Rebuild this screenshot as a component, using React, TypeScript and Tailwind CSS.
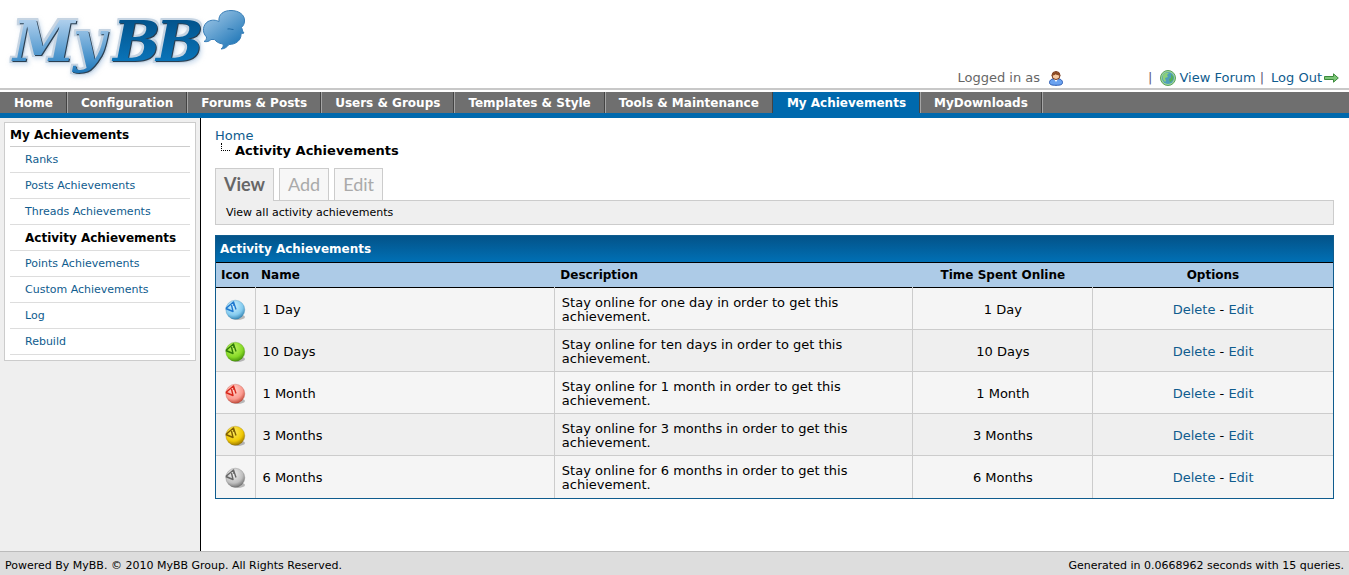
const NAV = ['Home', 'Configuration', 'Forums & Posts', 'Users & Groups', 'Templates & Style', 'Tools & Maintenance', 'My Achievements', 'MyDownloads'];
const SIDE = ['Ranks', 'Posts Achievements', 'Threads Achievements', 'Activity Achievements', 'Points Achievements', 'Custom Achievements', 'Log', 'Rebuild'];

const ROWS = [
  { id: 'blue', name: '1 Day', text: 'one day', light: '#d4f2fd', mid: '#84cbef', dark: '#2f7fae', hand: '#1f78d0' },
  { id: 'green', name: '10 Days', text: 'ten days', light: '#c4f56a', mid: '#86d926', dark: '#3f8a08', hand: '#2f7a08' },
  { id: 'red', name: '1 Month', text: '1 month', light: '#ffd8d0', mid: '#fb998e', dark: '#b8402f', hand: '#d8281c' },
  { id: 'gold', name: '3 Months', text: '3 months', light: '#ffec5e', mid: '#efc805', dark: '#8f6c00', hand: '#7d5c00' },
  { id: 'grey', name: '6 Months', text: '6 months', light: '#f0f0f0', mid: '#bfbfbf', dark: '#6a6a6a', hand: '#666666' },
];

function Logo() {
  return (
    <svg width="250" height="84" viewBox="0 0 250 84" role="img" aria-label="MyBB" className="block">
      <defs>
        <linearGradient id="my" x1="0" y1="18" x2="0" y2="76" gradientUnits="userSpaceOnUse">
          <stop offset="0" stopColor="#b4d2ee" />
          <stop offset="0.75" stopColor="#3f8dc8" />
          <stop offset="1" stopColor="#1470b4" />
        </linearGradient>
        <linearGradient id="bb" x1="0" y1="18" x2="0" y2="64" gradientUnits="userSpaceOnUse">
          <stop offset="0" stopColor="#02528a" />
          <stop offset="1" stopColor="#0a76bc" />
        </linearGradient>
        <linearGradient id="cloud" x1="0" y1="0" x2="0.8" y2="1">
          <stop offset="0" stopColor="#a9cdea" />
          <stop offset="1" stopColor="#1b74b6" />
        </linearGradient>
        <filter id="bevel" x="-10%" y="-10%" width="120%" height="130%" colorInterpolationFilters="sRGB">
          <feMorphology in="SourceAlpha" operator="dilate" radius="2" result="fat" />
          <feGaussianBlur in="fat" stdDeviation="0.6" result="rimShape" />
          <feFlood floodColor="#c6d4e2" />
          <feComposite in2="rimShape" operator="in" result="rim" />
          <feOffset in="fat" dx="1" dy="2" />
          <feGaussianBlur stdDeviation="2" result="haloShape" />
          <feFlood floodColor="#a8c4e2" floodOpacity="0.5" />
          <feComposite in2="haloShape" operator="in" result="halo" />
          <feOffset in="SourceAlpha" dx="1" dy="1" result="edgeShape" />
          <feFlood floodColor="#2a3f52" />
          <feComposite in2="edgeShape" operator="in" result="edge" />
          <feMerge>
            <feMergeNode in="halo" />
            <feMergeNode in="rim" />
            <feMergeNode in="edge" />
            <feMergeNode in="SourceGraphic" />
          </feMerge>
        </filter>
      </defs>
      <g fontFamily="'DejaVu Serif', serif" fontWeight="700" fontStyle="italic" fontSize="56" filter="url(#bevel)">
        <text x="13" y="61" fill="url(#my)">M</text>
        <text x="73" y="61" fill="url(#my)">y</text>
        <text x="113" y="61" fill="url(#bb)">B</text>
        <text x="156" y="61" fill="url(#bb)">B</text>
      </g>
      <path d="M219 21.500C218 14 224 10.500 231 10.500C239 10.500 245 15 244.500 21C244.500 24 243 26 241.500 27.500C242.500 29 242 31 244 33C242.500 33.500 241.500 33.500 241 34C241.500 40 236 44.500 229 44.500C227 47 224.500 49 221 49C223 47.500 223.500 46 223 44C218.500 43.500 216 41.500 214.500 39.500H211C209 41.500 207 42 204 41.500C206 40.500 206.500 39 206.500 37C201.500 32 203 24.500 208 21.500C212 19.500 216 20 219 21.500Z" fill="url(#cloud)" stroke="#3a7fb8" strokeWidth="1" />
      <path d="M227.500 29C230 28.500 231 29.500 233.500 29.500" stroke="#1f6aa5" fill="none" />
    </svg>
  );
}

function UserIcon() {
  return (
    <svg width="16" height="16" viewBox="0 0 16 16" aria-hidden="true">
      <path d="M1.500 12.500C1.500 10 4 8.500 8 8.500S14.500 10 14.500 12.500C14.500 14.800 12 15.300 8 15.300S1.500 14.800 1.500 12.500Z" fill="#6aa2f0" stroke="#2858b0" />
      <path d="M6 9L8 12L10 9Z" fill="#fff" />
      <circle cx="8" cy="5.500" r="4" fill="#f6c9a0" stroke="#70351c" />
      <path d="M3.800 6C3 0.500 13 0.500 12.200 6C10.500 5.500 8.500 4.800 7.500 4.300C6.500 5.500 5 5.500 3.800 6Z" fill="#8b4a24" />
    </svg>
  );
}

function GlobeIcon() {
  return (
    <svg width="16" height="16" viewBox="0 0 16 16" aria-hidden="true">
      <circle cx="8" cy="8" r="7.500" fill="#9fd69c" stroke="#5aa35e" />
      <circle cx="8" cy="8" r="6" fill="#4f9fba" />
      <path d="M3 5C5 2 8 2 9 3L7 5L8 7L5 8L6 11L5 12C3 10 2 8 3 5Z" fill="#8bd07a" />
      <path d="M11 4L13.500 7L13 10L10 12.500L9 9L11 8Z" fill="#54b05a" />
    </svg>
  );
}

function ArrowIcon() {
  return (
    <svg width="15" height="10" viewBox="0 0 15 10" aria-hidden="true">
      <path d="M0.500 3.500H9.500V0.800L14.300 5L9.500 9.200V6.500H0.500Z" fill="#7cc576" stroke="#3c8a3c" />
    </svg>
  );
}

function ClockIcon({ row }: { row: (typeof ROWS)[number] }) {
  return (
    <svg width="22" height="22" viewBox="0 0 22 22" role="img" aria-label={row.name} className="mx-auto block">
      <defs>
        <radialGradient id={row.id} cx="0.4" cy="0.3" r="0.75">
          <stop offset="0" stopColor={row.light} />
          <stop offset="0.65" stopColor={row.mid} />
          <stop offset="1" stopColor={row.dark} />
        </radialGradient>
      </defs>
      <ellipse cx="13.500" cy="18" rx="7.500" ry="3" fill="#000" opacity="0.25" />
      <circle cx="11.300" cy="10.700" r="9.500" fill={`url(#${row.id})`} stroke={row.dark} strokeOpacity="0.5" strokeWidth="0.600" />
      <path d="M1.800 9.500L9.500 3L10 7M1.800 9.500L9 12.500L7.500 6M9.500 3L12 10.500" fill="none" stroke={row.hand} strokeWidth="1.400" strokeLinejoin="round" />
    </svg>
  );
}

export default function App() {
  const link = 'text-[#0f5c8e] hover:underline';
  const cell = 'border-r border-[#ccc] pt-[2px]';
  return (
    <div className="flex min-h-screen flex-col bg-white font-['Verdana','DejaVu_Sans',sans-serif] text-[13px] leading-[14px] text-black">
      <header className="flex h-[90px] items-end justify-between border-b-2 border-[#c8c8c8]">
        <a href="#home" className="self-start"><Logo /></a>
        <div className="flex items-center pr-[10px] pb-[2px] leading-4 text-[#666]">
          <span className="mr-2">Logged in as</span>
          <UserIcon />
          <span className="ml-[84px] mr-2 text-[#5f5878]">|</span>
          <GlobeIcon />
          <a href="#forum" className={`ml-[3px] ${link}`}>View Forum</a>
          <span className="mx-1 text-[#5f5878]">|</span>
          <a href="#logout" className={`ml-[3px] flex items-center gap-[2px] ${link}`}>Log Out <ArrowIcon /></a>
        </div>
      </header>

      <nav className="mt-[2px] flex border-b-[5px] border-[#0069ad] bg-[#6f6f6f] text-[12px] font-bold leading-5 text-white">
        {NAV.map((item) => (
          <a
            key={item}
            href="#nav"
            className={`border-r border-r-[#444] pt-px pr-[13px] pl-[14px] shadow-[1px_0_0_#a5a5a5] ${item === 'My Achievements' ? 'bg-[#0069ad]' : ''}`}
          >
            {item}
          </a>
        ))}
      </nav>

      <div className="flex grow">
        <aside className="w-[201px] shrink-0 border-r border-black bg-[#efefef] px-1 pt-1 text-[11px]">
          <div className="border border-[#ccc] bg-white px-[5px] pb-[5px]">
            <h2 className="border-b border-[#ccc] pt-px text-[12px] font-bold leading-[22px]">My Achievements</h2>
            <ul>
              {SIDE.map((item) => (
                <li key={item} className="flex h-[26px] items-center border-b border-[#ddd] pt-px pl-[15px]">
                  <a href="#side" className={item === 'Activity Achievements' ? 'text-[12px] font-bold text-black' : link}>{item}</a>
                </li>
              ))}
            </ul>
          </div>
        </aside>

        <main className="min-w-0 grow px-[15px] pt-[10px] pl-[14px]">
          <a href="#home" className={`block leading-[15px] ${link}`}>Home</a>
          <div className="flex">
            <span className="ml-[6px] mr-[5px] h-2 w-[9px] border-b border-l border-dotted border-black" />
            <h1 className="font-bold leading-[15px]">Activity Achievements</h1>
          </div>

          <div className="mt-[10px] flex gap-[5px] font-['Trebuchet_MS','Lato',sans-serif] text-[18px] leading-[31px]">
            <a href="#view" className="relative -mb-px border border-b-0 border-[#ccc] bg-[#efefef] px-2 font-bold text-[#666]">View</a>
            <a href="#add" className="border border-b-0 border-[#ccc] bg-[#f7f7f7] px-2 text-[#aaa]">Add</a>
            <a href="#edit" className="border border-b-0 border-[#ccc] bg-[#f7f7f7] px-2 text-[#aaa]">Edit</a>
          </div>
          <p className="border border-[#ccc] bg-[#efefef] px-[10px] pt-px text-[11px] leading-[22px]">View all activity achievements</p>

          <section className="mt-[10px] border border-[#0f5c8e]">
            <h2 className="bg-linear-to-b from-[#035389] to-[#0070b5] px-1 text-[12px] font-bold leading-[26px] text-white">Activity Achievements</h2>
            <table className="w-full table-fixed border-collapse">
              <colgroup>
                <col className="w-[39px]" />
                <col className="w-[26.8%]" />
                <col className="w-[32.1%]" />
                <col className="w-[16.1%]" />
                <col />
              </colgroup>
              <thead>
                <tr className="h-[25px] border-y border-black bg-[#adcbe7] text-left text-[12px]">
                  <th className="px-[5px]">Icon</th>
                  <th className="px-[6px]">Name</th>
                  <th className="px-[6px]">Description</th>
                  <th className="text-center">Time Spent Online</th>
                  <th className="text-center">Options</th>
                </tr>
              </thead>
              <tbody>
                {ROWS.map((row) => (
                  <tr key={row.id} className="h-[42px] border-b border-[#ccc] odd:bg-[#f5f5f5] even:bg-[#efefef] last:border-b-0">
                    <td className={cell}><ClockIcon row={row} /></td>
                    <td className={`px-[7px] ${cell}`}>{row.name}</td>
                    <td className={`px-[7px] ${cell}`}>
                      <div className="max-w-[300px]">Stay online for {row.text} in order to get this achievement.</div>
                    </td>
                    <td className={`text-center ${cell}`}>{row.name}</td>
                    <td className="pt-[2px] text-center"><a href="#delete" className={link}>Delete</a> - <a href="#edit" className={link}>Edit</a></td>
                  </tr>
                ))}
              </tbody>
            </table>
          </section>
        </main>
      </div>

      <footer className="flex justify-between border-t border-[#bbb] bg-[#ddd] px-[5px] pt-1 text-[11px] leading-[19px]">
        <span>Powered By MyBB. © 2010 MyBB Group. All Rights Reserved.</span>
        <span>Generated in 0.0668962 seconds with 15 queries.</span>
      </footer>
    </div>
  );
}
